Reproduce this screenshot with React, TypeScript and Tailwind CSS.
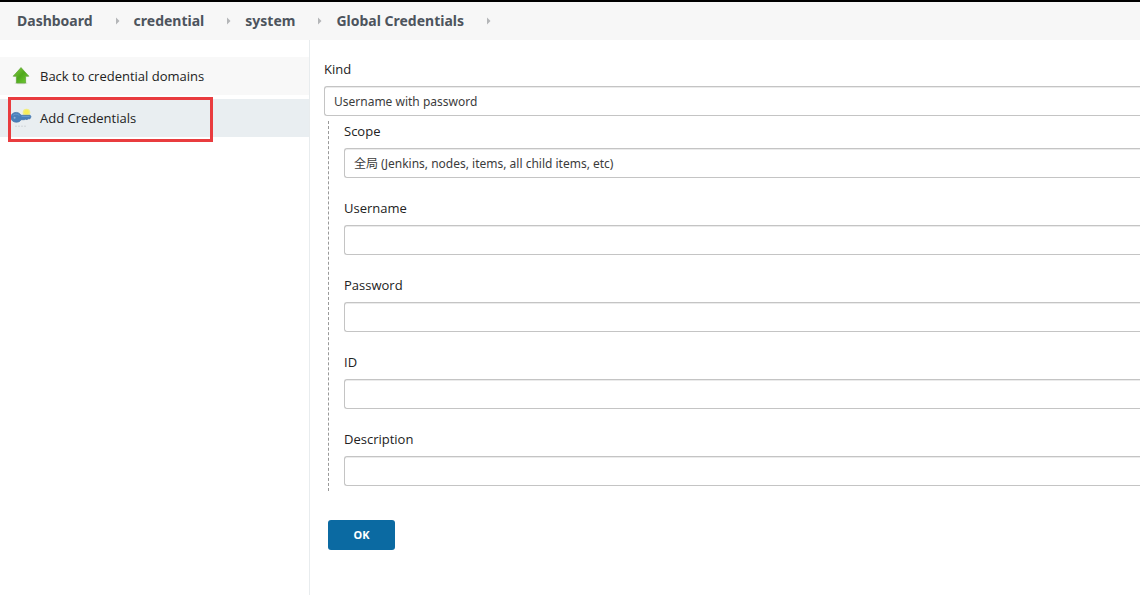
import React from 'react';

const BREADCRUMBS = ['Dashboard', 'credential', 'system', 'Global Credentials'];

const FIELDS = [
  { id: 'username', label: 'Username', type: 'text' },
  { id: 'password', label: 'Password', type: 'password' },
  { id: 'credential-id', label: 'ID', type: 'text' },
  { id: 'description', label: 'Description', type: 'text' },
];

const labelClass = "block h-5 mb-[7px] font-['Open_Sans',sans-serif] text-[13px] leading-5 font-medium text-[#222222]";
const controlClass =
  'block w-full h-[30px] appearance-none rounded-l-[3px] border border-r-0 border-[#c4c4c4] bg-white px-[9px] pt-px text-xs text-[#3c3c3c] shadow-[inset_0_1px_0_rgba(0,0,0,0.08)]';

function UpArrowIcon() {
  return (
    <svg width="18" height="18" viewBox="0 0 18 18" aria-hidden="true">
      <defs>
        <linearGradient id="arrow-fill" x1="0" y1="0" x2="1" y2="1">
          <stop offset="0" stopColor="#8bd146" />
          <stop offset="0.5" stopColor="#4fa81c" />
          <stop offset="1" stopColor="#74d035" />
        </linearGradient>
      </defs>
      <ellipse cx="9" cy="16.3" rx="6.5" ry="1" fill="#dcdedb" />
      <path
        d="M9 0.6 16.8 9.2H13.6V16H4.4V9.2H1.2Z"
        fill="url(#arrow-fill)"
        stroke="#63a83a"
        strokeWidth="0.8"
        strokeLinejoin="round"
      />
    </svg>
  );
}

function KeyIcon() {
  return (
    <svg width="22" height="20" viewBox="0 0 22 20" aria-hidden="true">
      <path d="M5 18.2H17" stroke="#cdd3d6" strokeWidth="0.9" strokeDasharray="2 1" />
      <circle cx="16.5" cy="4.5" r="3.8" fill="#f1ee86" />
      <circle cx="16.5" cy="4.2" r="2.4" fill="#f8ee58" />
      <path
        d="M6.2 4.4C8.8 4.4 10.2 5.8 11 7.3H20.2L21 8.8 20 10.8H18L17 11.7 15.6 11.2 14.2 11.7H11C10.2 13.4 8.8 14.2 6.2 14.2 3 14.2 1 12.2 1 9.3S3 4.4 6.2 4.4Z"
        fill="#4a7fba"
        stroke="#4172ab"
        strokeWidth="0.7"
      />
      <path d="M2.8 7.4C4.2 5.8 7.4 5.6 9.4 7.4M11.6 8.5H19.6" stroke="#6f9fd2" strokeWidth="0.8" fill="none" />
      <circle cx="4.6" cy="9.8" r="1" fill="#8fb2d8" />
    </svg>
  );
}

function Breadcrumbs() {
  return (
    <nav aria-label="Breadcrumb" className="h-10 border-t-2 border-black bg-[#f7f7f7] pl-[17px]">
      <ol className="flex h-full items-center">
        {BREADCRUMBS.map((name) => (
          <li key={name} className="flex items-center">
            <a href="#" className="text-sm font-bold text-[#4d545d]">
              {name}
            </a>
            <svg width="5" height="8" viewBox="0 0 5 8" className="ml-[22px] mr-[14px]" aria-hidden="true">
              <path d="M1 0.5 4.5 4 1 7.5Z" fill="#b4b6b8" />
            </svg>
          </li>
        ))}
      </ol>
    </nav>
  );
}

function Sidebar() {
  return (
    <aside className="w-[310px] shrink-0 border-r border-[#e8ecee] pt-[17px]">
      <nav aria-label="Tasks" className="flex flex-col gap-1 font-['Open_Sans',sans-serif] text-[13px] text-[#222222]">
        <a href="#" className="flex h-[38px] items-center bg-[#f8f8f8] pl-3">
          <span className="w-7">
            <UpArrowIcon />
          </span>
          <span className="pt-0.5">Back to credential domains</span>
        </a>
        <a href="#" className="relative flex h-[38px] items-center bg-[#e9eef1] pl-[10px]">
          <span className="w-[30px]">
            <KeyIcon />
          </span>
          <span className="pt-0.5">Add Credentials</span>
          <span className="absolute -top-[2px] left-2 h-[45px] w-[205px] border-3 border-[#e93c3f]" />
        </a>
      </nav>
    </aside>
  );
}

export default function App() {
  return (
    <div className="flex min-h-screen flex-col bg-white font-['Noto_Sans','Noto_Sans_CJK_SC',sans-serif]">
      <Breadcrumbs />
      <div className="flex flex-1">
        <Sidebar />
        <main className="min-w-0 flex-1 pt-[19px] pl-[14px]">
          <form onSubmit={(e) => e.preventDefault()}>
            <label htmlFor="kind" className={labelClass}>
              Kind
            </label>
            <select id="kind" className={controlClass}>
              <option>Username with password</option>
            </select>

            <div className="mt-[5px] ml-1 flex flex-col gap-5 border-l border-dashed border-[#999999] pb-[5px] pl-[15px]">
              <div>
                <label htmlFor="scope" className={labelClass}>
                  Scope
                </label>
                <select id="scope" className={controlClass}>
                  <option>全局 (Jenkins, nodes, items, all child items, etc)</option>
                </select>
              </div>
              {FIELDS.map((field) => (
                <div key={field.id}>
                  <label htmlFor={field.id} className={labelClass}>
                    {field.label}
                  </label>
                  <input id={field.id} type={field.type} className={controlClass} />
                </div>
              ))}
            </div>

            <button
              type="submit"
              className="mt-[29px] ml-1 h-[30px] w-[67px] rounded-[3px] bg-[#0b6aa2] text-[11px] font-bold text-white"
            >
              OK
            </button>
          </form>
        </main>
      </div>
    </div>
  );
}
